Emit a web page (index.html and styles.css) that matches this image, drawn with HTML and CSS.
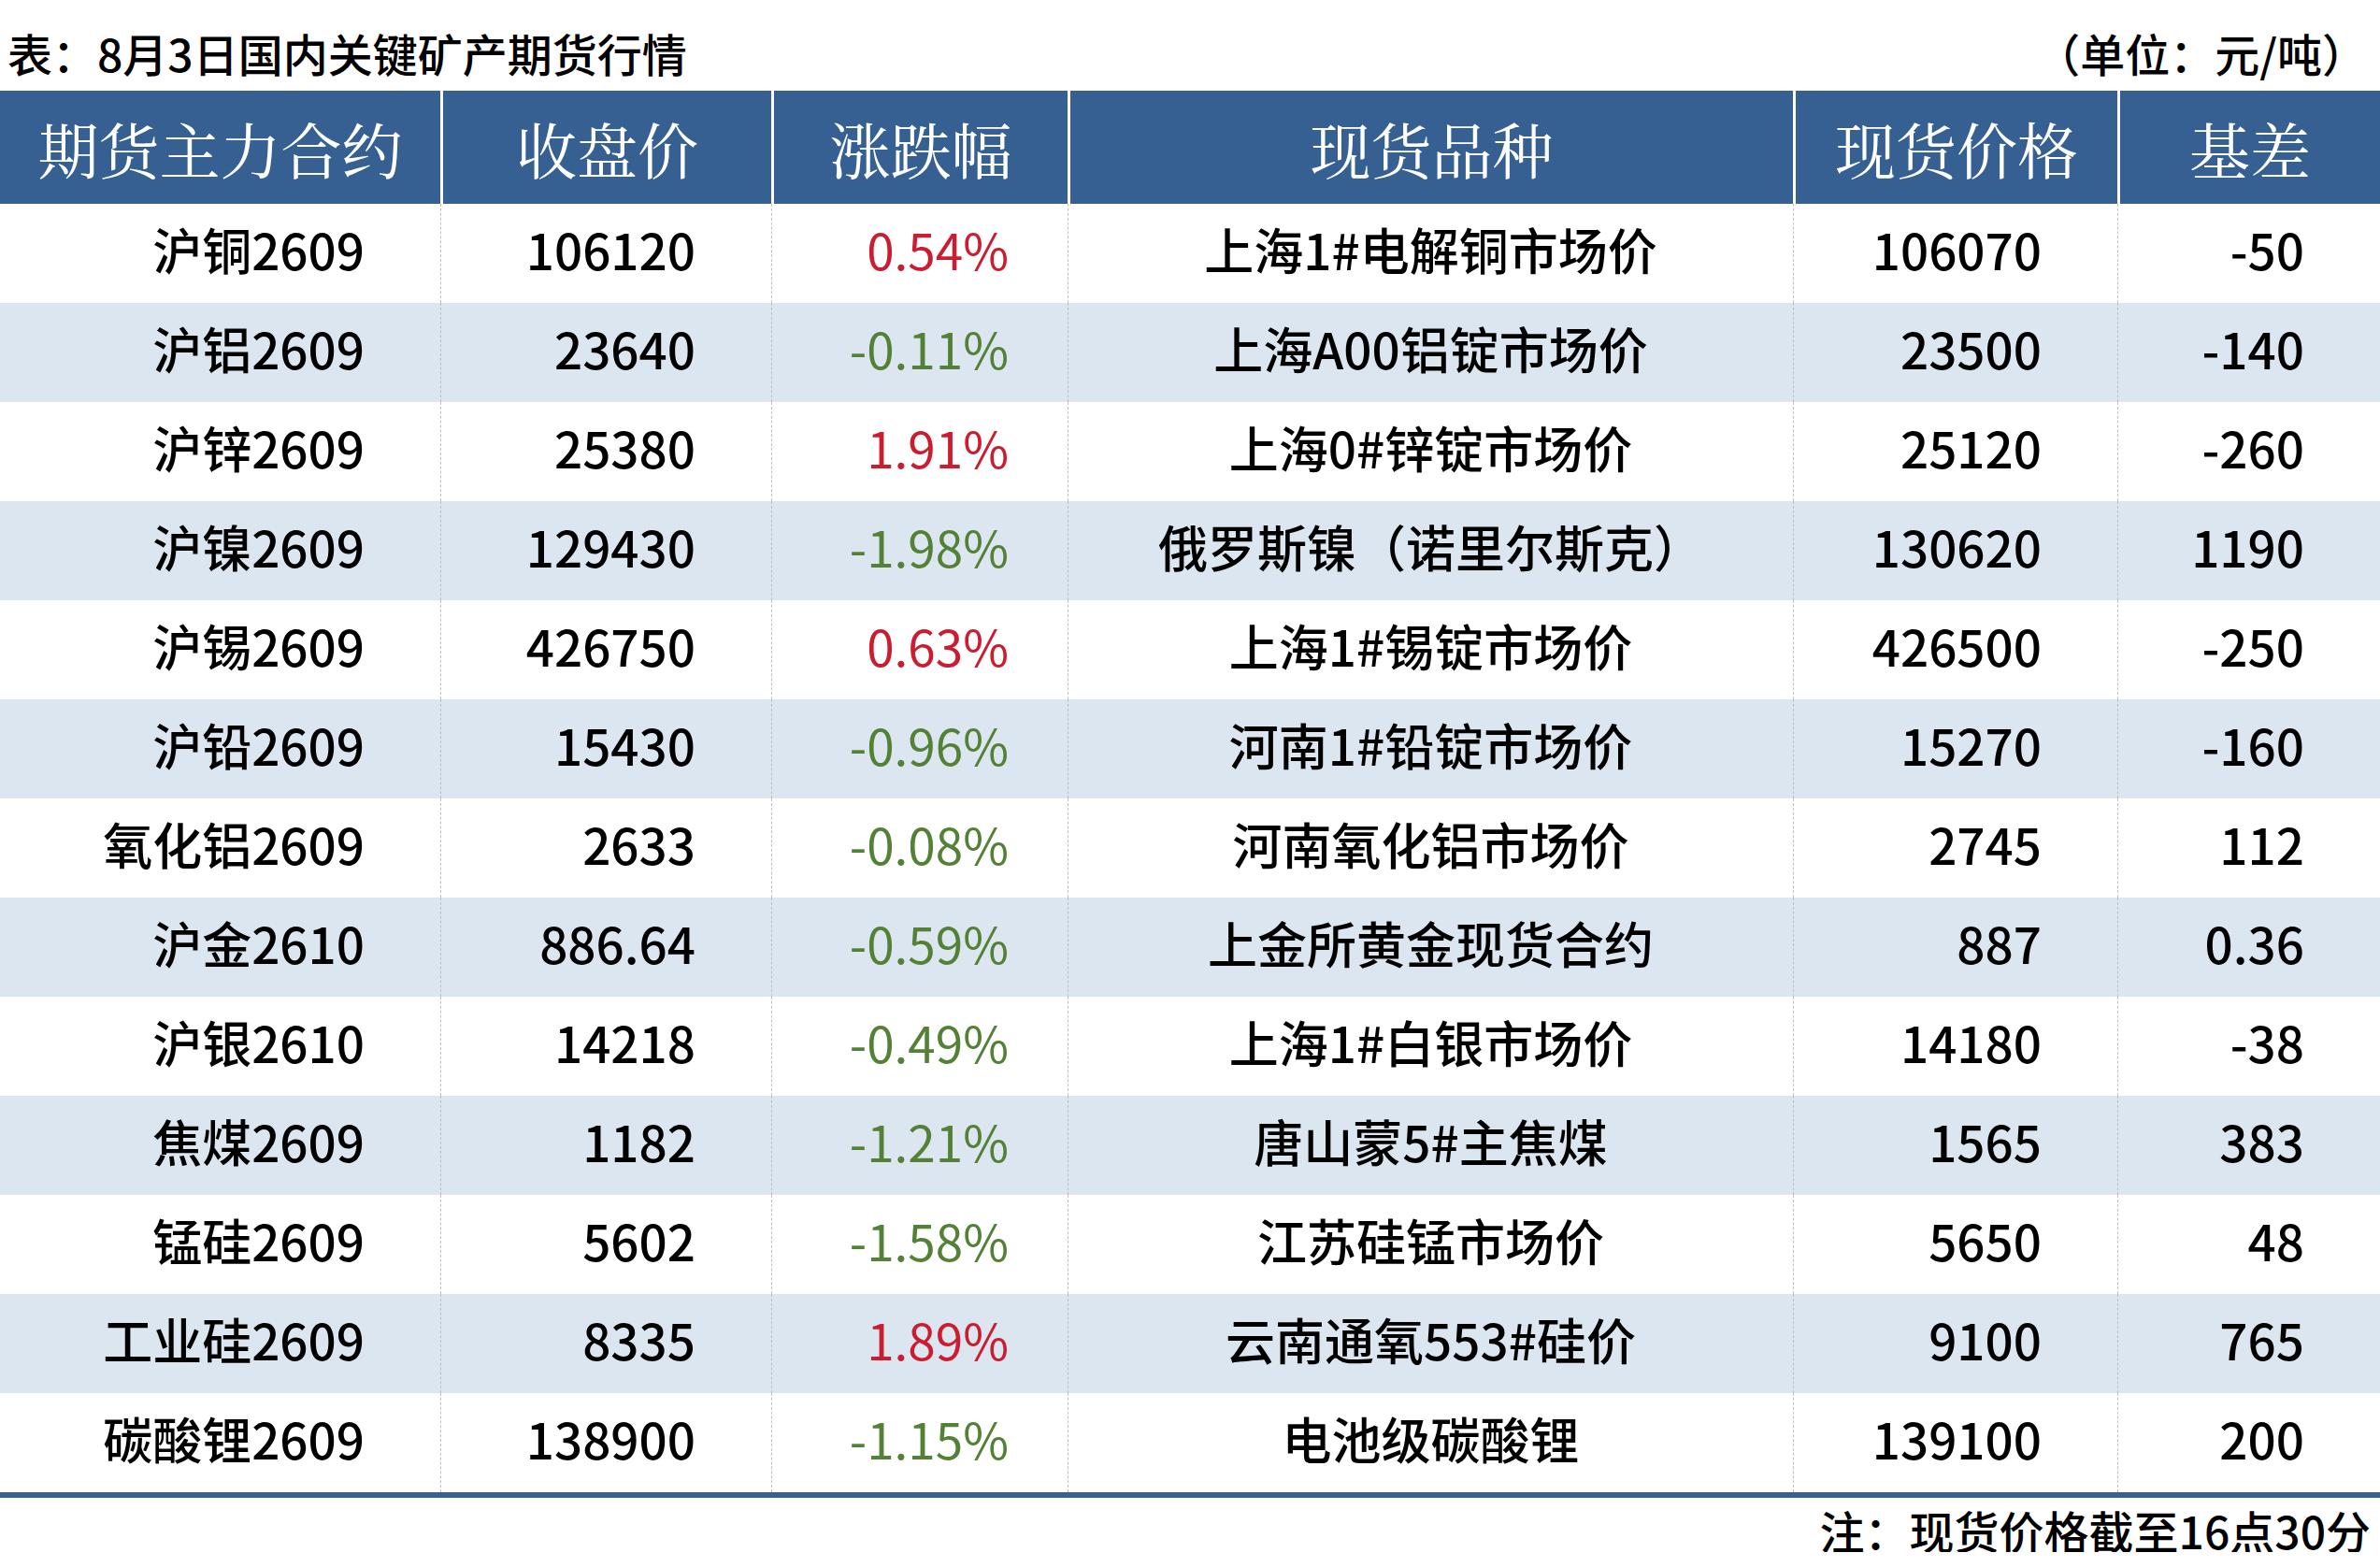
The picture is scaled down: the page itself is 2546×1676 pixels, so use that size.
FILE: index.html
```html
<!DOCTYPE html>
<html lang="zh-CN">
<head>
<meta charset="utf-8">
<title>8月3日国内关键矿产期货行情</title>
<link rel="stylesheet" href="styles.css">
</head>
<body>
<div class="page">
  <div class="caption">
    <span class="title">表：8月3日国内关键矿产期货行情</span>
    <span class="unit">（单位：元/吨）</span>
  </div>
  <div class="sheet">
    <div class="row head">
      <div class="cell">期货主力合约</div>
      <div class="cell">收盘价</div>
      <div class="cell">涨跌幅</div>
      <div class="cell">现货品种</div>
      <div class="cell">现货价格</div>
      <div class="cell">基差</div>
    </div>
    <div class="row">
      <div class="cell num">沪铜2609</div><div class="cell num">106120</div><div class="cell pct up">0.54%</div><div class="cell mid">上海1#电解铜市场价</div><div class="cell num">106070</div><div class="cell num">-50</div>
    </div>
    <div class="row alt">
      <div class="cell num">沪铝2609</div><div class="cell num">23640</div><div class="cell pct down">-0.11%</div><div class="cell mid">上海A00铝锭市场价</div><div class="cell num">23500</div><div class="cell num">-140</div>
    </div>
    <div class="row">
      <div class="cell num">沪锌2609</div><div class="cell num">25380</div><div class="cell pct up">1.91%</div><div class="cell mid">上海0#锌锭市场价</div><div class="cell num">25120</div><div class="cell num">-260</div>
    </div>
    <div class="row alt">
      <div class="cell num">沪镍2609</div><div class="cell num">129430</div><div class="cell pct down">-1.98%</div><div class="cell mid">俄罗斯镍（诺里尔斯克）</div><div class="cell num">130620</div><div class="cell num">1190</div>
    </div>
    <div class="row">
      <div class="cell num">沪锡2609</div><div class="cell num">426750</div><div class="cell pct up">0.63%</div><div class="cell mid">上海1#锡锭市场价</div><div class="cell num">426500</div><div class="cell num">-250</div>
    </div>
    <div class="row alt">
      <div class="cell num">沪铅2609</div><div class="cell num">15430</div><div class="cell pct down">-0.96%</div><div class="cell mid">河南1#铅锭市场价</div><div class="cell num">15270</div><div class="cell num">-160</div>
    </div>
    <div class="row">
      <div class="cell num">氧化铝2609</div><div class="cell num">2633</div><div class="cell pct down">-0.08%</div><div class="cell mid">河南氧化铝市场价</div><div class="cell num">2745</div><div class="cell num">112</div>
    </div>
    <div class="row alt">
      <div class="cell num">沪金2610</div><div class="cell num">886.64</div><div class="cell pct down">-0.59%</div><div class="cell mid">上金所黄金现货合约</div><div class="cell num">887</div><div class="cell num">0.36</div>
    </div>
    <div class="row">
      <div class="cell num">沪银2610</div><div class="cell num">14218</div><div class="cell pct down">-0.49%</div><div class="cell mid">上海1#白银市场价</div><div class="cell num">14180</div><div class="cell num">-38</div>
    </div>
    <div class="row alt">
      <div class="cell num">焦煤2609</div><div class="cell num">1182</div><div class="cell pct down">-1.21%</div><div class="cell mid">唐山蒙5#主焦煤</div><div class="cell num">1565</div><div class="cell num">383</div>
    </div>
    <div class="row">
      <div class="cell num">锰硅2609</div><div class="cell num">5602</div><div class="cell pct down">-1.58%</div><div class="cell mid">江苏硅锰市场价</div><div class="cell num">5650</div><div class="cell num">48</div>
    </div>
    <div class="row alt">
      <div class="cell num">工业硅2609</div><div class="cell num">8335</div><div class="cell pct up">1.89%</div><div class="cell mid">云南通氧553#硅价</div><div class="cell num">9100</div><div class="cell num">765</div>
    </div>
    <div class="row last">
      <div class="cell num">碳酸锂2609</div><div class="cell num">138900</div><div class="cell pct down">-1.15%</div><div class="cell mid">电池级碳酸锂</div><div class="cell num">139100</div><div class="cell num">200</div>
    </div>
  </div>
  <div class="note">注：现货价格截至16点30分</div>
</div>
</body>
</html>
```

FILE: styles.css
```css
html, body {
  margin: 0;
  padding: 0;
  background: #ffffff;
}

.page {
  width: 2546px;
  font-family: "Noto Sans CJK SC", "Noto Sans", sans-serif;
  font-weight: 500;
  color: #000000;
}

.caption {
  height: 97px;
  box-sizing: border-box;
  display: flex;
  justify-content: space-between;
  align-items: flex-end;
  padding: 0 14px 17px 8px;
  font-size: 48px;
  line-height: 48px;
}

.sheet {
  border-bottom: 6px solid #386191;
}

.row {
  display: grid;
  grid-template-columns: 471px 354px 317px 776px 347px 281px;
  height: 106px;
}

.row.alt {
  background: #dce6f1;
}

.cell {
  box-sizing: border-box;
  display: flex;
  align-items: center;
  font-size: 53px;
  line-height: 53px;
  padding-bottom: 9px;
  white-space: nowrap;
}

.row .cell + .cell {
  border-left: 1px dashed #bfbfbf;
}

.row.head {
  height: 121px;
  background: #376092;
}

.row.head .cell {
  justify-content: center;
  color: #ffffff;
  font-family: "Noto Serif CJK SC", "Noto Serif CJK", "AR PL UMing CN", "Noto Sans CJK SC", serif;
  font-weight: 400;
  font-size: 65px;
  line-height: 65px;
  padding-bottom: 0;
  padding-top: 2px;
}

.row.head .cell + .cell {
  border-left: 3px solid #ffffff;
}

.num {
  justify-content: flex-end;
  padding-right: 81px;
}

.pct {
  justify-content: flex-end;
  padding-right: 63px;
  font-weight: 400;
}

.mid {
  justify-content: center;
}

.up {
  color: #cc1c30;
}

.down {
  color: #538135;
}

.note {
  text-align: right;
  font-size: 48px;
  line-height: 48px;
  padding: 10px 10px 0 0;
}
```
